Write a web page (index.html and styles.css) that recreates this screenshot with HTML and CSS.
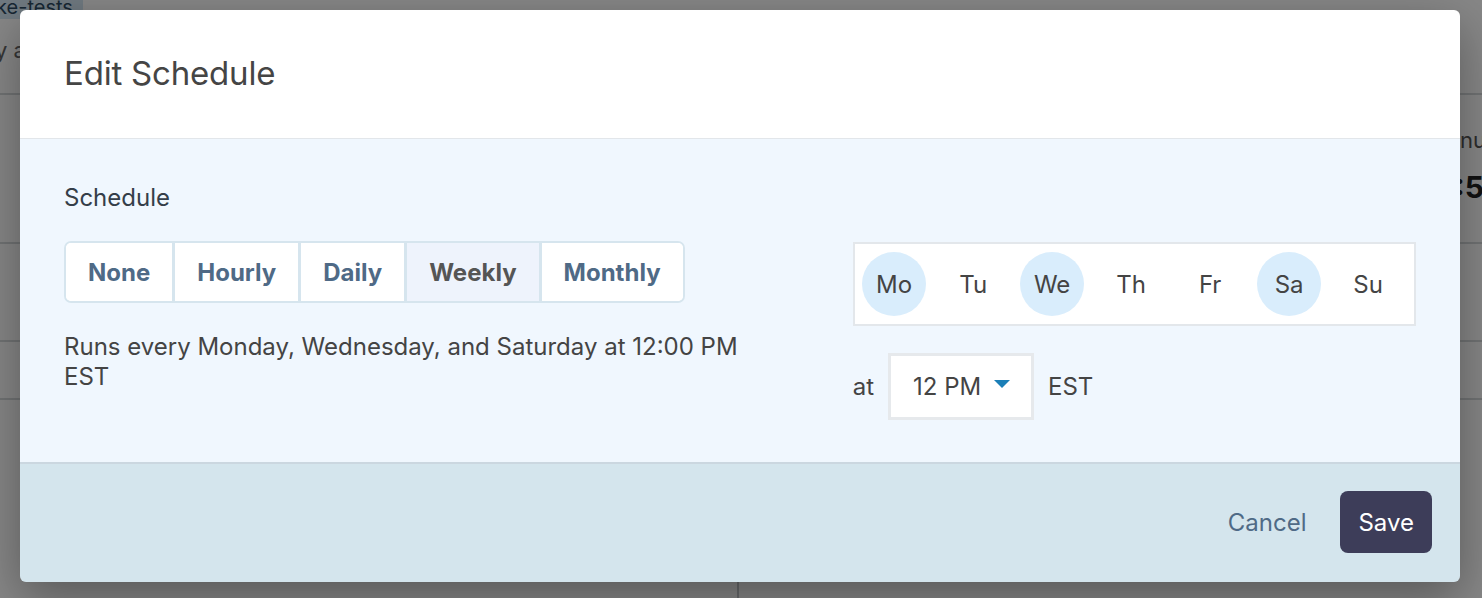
FILE: index.html
```html
<!DOCTYPE html>
<html lang="en">
<head>
    <meta charset="UTF-8">
    <meta name="viewport" content="width=device-width, initial-scale=1.0">
    <title>Edit Schedule</title>
    <link rel="stylesheet" href="styles.css">
</head>
<body>
    <!-- page underneath the dialog -->
    <div class="page">
        <div class="page-top">
            <span class="chip">ke-tests</span>
            <p class="muted">Daily at</p>
        </div>
        <div class="page-row">
            <span></span>
            <div class="stat">
                <span class="stat-label">Menu</span>
                <span class="stat-value">10:5</span>
            </div>
        </div>
        <div class="page-row short"></div>
        <div class="page-row tiny"></div>
        <div class="page-split">
            <div></div>
            <div></div>
        </div>
    </div>

    <div class="overlay">
        <div class="modal">
            <div class="modal-header">
                <h2>Edit Schedule</h2>
            </div>

            <div class="modal-body">
                <div class="col-left">
                    <label class="field-label">Schedule</label>
                    <div class="segmented">
                        <button>None</button>
                        <button>Hourly</button>
                        <button>Daily</button>
                        <button class="active">Weekly</button>
                        <button>Monthly</button>
                    </div>
                    <p class="summary">Runs every Monday, Wednesday, and Saturday at 12:00 PM EST</p>
                </div>

                <div class="col-right">
                    <div class="days">
                        <span class="day on">Mo</span>
                        <span class="day">Tu</span>
                        <span class="day on">We</span>
                        <span class="day">Th</span>
                        <span class="day">Fr</span>
                        <span class="day on">Sa</span>
                        <span class="day">Su</span>
                    </div>
                    <div class="time-row">
                        <span>at</span>
                        <div class="select">
                            <span>12 PM</span>
                            <svg width="16" height="9" viewBox="0 0 16 9"><path d="M0 0h16L8 8z" fill="#1b7fb7"/></svg>
                        </div>
                        <span>EST</span>
                    </div>
                </div>
            </div>

            <div class="modal-footer">
                <button class="btn-link">Cancel</button>
                <button class="btn-primary">Save</button>
            </div>
        </div>
    </div>
</body>
</html>
```

FILE: styles.css
```css
:root {
    --text: #444;
    --slate: #4f6a86;
    --line: #d6e5ee;
    --body-bg: #f0f7fe;
    --foot-bg: #d4e5ed;
    --navy: #3d3d59;
}
* {
    box-sizing: border-box;
}
body {
    margin: 0;
    width: 1482px;
    height: 598px;
    overflow: hidden;
    font-family: 'Inter', 'Liberation Sans', sans-serif;
    background: #fff;
    position: relative;
}

/* background page */
.page {
    height: 598px;
    display: flex;
    flex-direction: column;
}
.page-top {
    height: 95px;
    border-bottom: 2px solid #d6d9dc;
}
.chip {
    display: inline-block;
    margin-left: -14px;
    padding: 0 10px;
    height: 19px;
    line-height: 14px;
    font-size: 20px;
    color: #2d4b62;
    background: #d4e6f3;
    border-radius: 0 0 10px 0;
    overflow: hidden;
}
.muted {
    margin: 14px 0 0 -44px;
    font-size: 22px;
    color: #666;
}
.page-row {
    height: 149px;
    border-bottom: 2px solid #d6d9dc;
    display: flex;
    justify-content: space-between;
}
.page-row.short {
    height: 98px;
}
.page-row.tiny {
    height: 58px;
}
.stat {
    display: flex;
    flex-direction: column;
    align-items: flex-end;
    padding-top: 32px;
    gap: 16px;
}
.stat-label {
    font-size: 22px;
    color: #555;
    margin-right: -4px;
}
.stat-value {
    font-size: 30px;
    font-weight: bold;
    color: #222;
    margin-right: -2px;
}
.page-split {
    flex: 1;
    display: grid;
    grid-template-columns: 739px 1fr;
}
.page-split div:first-child {
    border-right: 2px solid #c4c8cc;
}

/* dialog */
.overlay {
    position: absolute;
    inset: 0;
    background: rgba(0, 0, 0, 0.47);
    padding: 10px 22px 16px 20px;
}
.modal {
    width: 1440px;
    height: 572px;
    border-radius: 6px;
    overflow: hidden;
    display: flex;
    flex-direction: column;
    box-shadow: 0 16px 50px rgba(0, 0, 0, 0.35);
}
.modal-header {
    height: 129px;
    background: #fff;
    border-bottom: 1px solid #e2e6ea;
    display: flex;
    align-items: center;
    padding: 0 44px;
}
.modal-header h2 {
    margin: 0 0 2px;
    font-size: 33px;
    font-weight: 400;
    color: #454545;
    letter-spacing: -0.2px;
}
.modal-body {
    height: 325px;
    background: var(--body-bg);
    border-bottom: 2px solid #cbd7e0;
    padding: 0 44px;
    display: grid;
    grid-template-columns: 7fr 5fr;
}
.col-left {
    padding: 45px 78px 0 0;
}
.field-label {
    display: block;
    font-size: 24px;
    line-height: 28px;
    color: #343e49;
}
.segmented {
    margin-top: 29px;
    display: inline-flex;
    height: 62px;
    border: 2px solid var(--line);
    border-radius: 7px;
    background: #fff;
    overflow: hidden;
}
.segmented button {
    font-family: inherit;
    font-size: 24px;
    font-weight: 700;
    color: var(--slate);
    background: #fff;
    border: none;
    border-left: 3px solid var(--line);
    padding: 0 22px;
}
.segmented button:first-child {
    border-left: none;
}
.segmented button.active {
    background: #eef3fc;
    color: #555;
}
.summary {
    margin: 29px 0 0;
    font-size: 24px;
    line-height: 30px;
    color: var(--text);
}
.col-right {
    padding-top: 103px;
}
.days {
    display: flex;
    height: 84px;
    border: 2px solid #e3e7eb;
    background: #fff;
    padding: 8px 0;
}
.day {
    width: 79px;
    height: 64px;
    display: flex;
    align-items: center;
    justify-content: center;
    font-size: 24px;
    color: var(--text);
    position: relative;
    isolation: isolate;
}
.day.on::before {
    content: "";
    position: absolute;
    width: 64px;
    height: 64px;
    border-radius: 50%;
    background: #d9edfc;
    z-index: -1;
}
.time-row {
    margin-top: 27px;
    display: flex;
    align-items: center;
    font-size: 24px;
    color: var(--text);
}
.select {
    margin: 0 14px;
    width: 146px;
    height: 67px;
    border: 3px solid #e6e9ec;
    background: #fff;
    display: flex;
    align-items: center;
    padding: 0 0 0 22px;
    gap: 13px;
}
.select svg {
    margin-top: -4px;
}
.modal-footer {
    flex: 1;
    background: var(--foot-bg);
    display: flex;
    align-items: center;
    justify-content: flex-end;
    padding: 0 28px 2px 0;
    gap: 20px;
}
.modal-footer button {
    font-family: inherit;
    font-size: 24px;
    border: none;
    cursor: pointer;
}
.btn-link {
    background: none;
    color: var(--slate);
    padding: 0 14px;
}
.btn-primary {
    background: var(--navy);
    color: #fff;
    height: 62px;
    padding: 0 18px;
    border-radius: 8px;
}
```
